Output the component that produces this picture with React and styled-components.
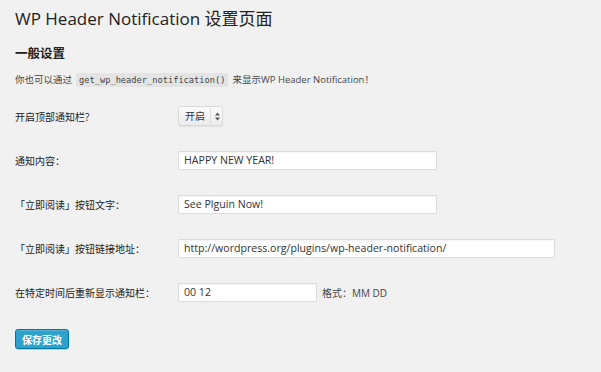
import styled, { createGlobalStyle } from "styled-components";

const GlobalStyle = createGlobalStyle`
  html, body {
    margin: 0;
    padding: 0;
    background: #f1f1f1;
  }
  body {
    font-family: "Open Sans", "Noto Sans CJK SC", sans-serif;
    color: #444;
    font-size: 10px;
  }
`;

const Wrap = styled.div`
  padding: 7px 15px 20px 15px;
`;

const Title = styled.h2`
  margin: 0;
  font-size: 17px;
  font-weight: 400;
  line-height: 24px;
  color: #222;
`;

const Section = styled.h3`
  margin: 14px 0 0;
  font-size: 12.5px;
  font-weight: 700;
  line-height: 18px;
  color: #222;
`;

const Desc = styled.p`
  margin: 10px 0 0;
  font-size: 9.5px;
  line-height: 14px;
  color: #444;
`;

const Code = styled.code`
  font-family: "DejaVu Sans Mono", monospace;
  font-size: 8.7px;
  background: #e4e4e4;
  padding: 2px 3px;
  margin: 0 4px;
`;

const Form = styled.div`
  display: flex;
  flex-direction: column;
  gap: 24px;
  margin-top: 19px;
`;

const Row = styled.div`
  display: grid;
  grid-template-columns: 163px 1fr;
  align-items: center;
  min-height: 20px;
`;

const Label = styled.label`
  font-size: 10px;
  color: #222;
`;

const Field = styled.div`
  display: flex;
  align-items: center;
  gap: 5px;
`;

const Input = styled.div`
  box-sizing: border-box;
  width: ${(p) => p.w}px;
  height: 19px;
  background: #fff;
  border: 1px solid #ddd;
  box-shadow: inset 0 1px 2px rgba(0, 0, 0, 0.05);
  padding: 0 5px;
  font-size: 10.6px;
  line-height: 17px;
  color: #333;
  white-space: nowrap;
  overflow: hidden;
`;

const Select = styled.div`
  box-sizing: border-box;
  display: flex;
  align-items: center;
  width: 45px;
  height: 20px;
  border: 1px solid #d8d8d8;
  border-radius: 3px;
  background: linear-gradient(#fbfbfb, #ececec);
  box-shadow: 0 1px 1px rgba(0, 0, 0, 0.06);
  font-size: 10px;
  color: #333;
`;

const SelectText = styled.span`
  padding-left: 6px;
  width: 25px;
  border-right: 1px solid #ddd;
  line-height: 16px;
`;

const Arrows = styled.svg`
  margin-left: 4px;
`;

const Hint = styled.span`
  font-size: 10px;
  color: #444;
`;

const Button = styled.button`
  margin-top: 27px;
  box-sizing: border-box;
  width: 54px;
  height: 20px;
  background: #2ea2cc;
  border: 1px solid #0074a2;
  border-radius: 3px;
  box-shadow: inset 0 1px 0 rgba(120, 200, 230, 0.5), 0 1px 0 rgba(0, 0, 0, 0.15);
  color: #fff;
  font-family: "Noto Sans CJK SC", sans-serif;
  font-size: 10px;
  font-weight: 700;
  padding: 0;
`;

export default function App() {
  return (
    <>
      <GlobalStyle />
      <Wrap>
        <Title>WP Header Notification 设置页面</Title>
        <Section>一般设置</Section>
        <Desc>
          你也可以通过<Code>get_wp_header_notification()</Code>来显示WP Header Notification！
        </Desc>
        <Form>
          <Row>
            <Label>开启顶部通知栏?</Label>
            <Field>
              <Select>
                <SelectText>开启</SelectText>
                <Arrows width="5" height="9" viewBox="0 0 5 9">
                  <path d="M0 3.5 L2.5 0.5 L5 3.5 Z M0 5.5 L2.5 8.5 L5 5.5 Z" fill="#555" />
                </Arrows>
              </Select>
            </Field>
          </Row>
          <Row>
            <Label>通知内容：</Label>
            <Field>
              <Input w={259}>HAPPY NEW YEAR!</Input>
            </Field>
          </Row>
          <Row>
            <Label>「立即阅读」按钮文字：</Label>
            <Field>
              <Input w={259}>See Plguin Now!</Input>
            </Field>
          </Row>
          <Row>
            <Label>「立即阅读」按钮链接地址：</Label>
            <Field>
              <Input w={377}>http://wordpress.org/plugins/wp-header-notification/</Input>
            </Field>
          </Row>
          <Row>
            <Label>在特定时间后重新显示通知栏：</Label>
            <Field>
              <Input w={139}>00 12</Input>
              <Hint>格式：MM DD</Hint>
            </Field>
          </Row>
        </Form>
        <Button>保存更改</Button>
      </Wrap>
    </>
  );
}
